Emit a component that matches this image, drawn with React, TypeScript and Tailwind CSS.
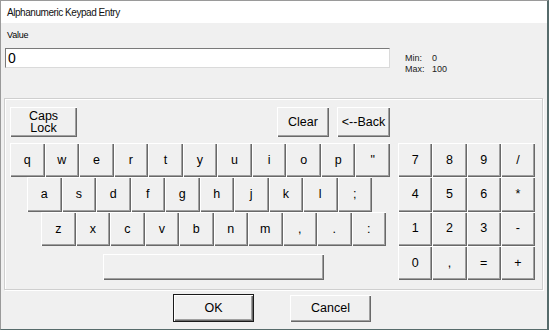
import React from "react";

const btn =
  "flex items-center justify-center bg-[#f0f0f0] text-black shadow-[inset_1px_1px_#ffffff,inset_-1px_-1px_#696969,inset_-2px_-2px_#a0a0a0] leading-none";

function Key({ label, className = "" }: { label: string; className?: string }) {
  return <div className={`${btn} text-[12.5px] ${className}`}>{label}</div>;
}

export default function App() {
  const row1 = ["q", "w", "e", "r", "t", "y", "u", "i", "o", "p", '"'];
  const row2 = ["a", "s", "d", "f", "g", "h", "j", "k", "l", ";"];
  const row3 = ["z", "x", "c", "v", "b", "n", "m", ",", ".", ":"];
  const pad = ["7", "8", "9", "/", "4", "5", "6", "*", "1", "2", "3", "-", "0", ",", "=", "+"];
  return (
    <div className="w-[549px] h-[330px] bg-[#f0f0f0] border-t border-l border-[#9a9a9a] border-r-2 border-r-[#566b6b] border-b border-b-[#566b6b] flex flex-col font-['Liberation_Sans',Arial,sans-serif] text-black overflow-hidden">
      <div className="h-[22px] bg-white flex items-center pl-[6px] text-[10px] tracking-[-0.45px] text-[#111]">
        Alphanumeric Keypad Entry
      </div>
      <div className="flex flex-col">
        <div className="mt-[6px] pl-[6px] text-[9px] leading-[12px] tracking-[-0.2px]">Value</div>
        <div className="mt-[7px] ml-[4px] flex items-start">
          <div className="w-[385px] h-[20px] bg-white border border-t-[#7a7a7a] border-l-[#7a7a7a] border-r-[#dadada] border-b-[#dadada] flex items-center pl-[2px] text-[14px] leading-none">
            0
          </div>
          <div className="ml-[15px] mt-[5px] flex flex-col text-[9px] leading-[11px] text-[#222]">
            <div className="flex">
              <span className="w-[27px]">Min:</span>
              <span>0</span>
            </div>
            <div className="flex">
              <span className="w-[27px]">Max:</span>
              <span>100</span>
            </div>
          </div>
        </div>
        <div className="mt-[23px] ml-[3px] w-[539px] h-[192px] border border-[#cfcfcf] shadow-[inset_1px_1px_#ffffff,1px_1px_#ffffff] flex pl-[5px] pt-[8px]">
          <div className="w-[380px] flex flex-col">
            <div className="h-[30px] flex">
              <div className={`${btn} w-[67px] text-[12.5px] flex-col leading-[14px]`}>
                <span>Caps</span>
                <span>Lock</span>
              </div>
              <Key label="Clear" className="ml-[200px] w-[52px]" />
              <Key label="<--Back" className="ml-[8px] w-[53px]" />
            </div>
            <div className="mt-[6px] h-[103px] flex flex-col">
              <div className="flex-1 grid grid-cols-11 w-[380px]">
                {row1.map((k) => (
                  <Key key={k} label={k} />
                ))}
              </div>
              <div className="flex-1 grid grid-cols-10 w-[345px] ml-[17px]">
                {row2.map((k) => (
                  <Key key={k} label={k} />
                ))}
              </div>
              <div className="flex-1 grid grid-cols-10 w-[345px] ml-[31px]">
                {row3.map((k) => (
                  <Key key={k} label={k} />
                ))}
              </div>
            </div>
            <div className={`${btn} mt-[8px] ml-[93px] w-[221px] h-[26px]`} />
          </div>
          <div className="ml-[8px] mt-[36px] w-[137px] h-[137px] grid grid-cols-4 grid-rows-4">
            {pad.map((k, i) => (
              <Key key={i} label={k} />
            ))}
          </div>
        </div>
        <div className="mt-[4px] flex">
          <div className="ml-[172px] w-[81px] h-[28px] border border-[#1a1a1a] flex">
            <Key label="OK" className="flex-1 text-[12.5px]" />
          </div>
          <Key label="Cancel" className="ml-[36px] w-[81px] h-[27px] mt-[1px]" />
        </div>
      </div>
    </div>
  );
}
